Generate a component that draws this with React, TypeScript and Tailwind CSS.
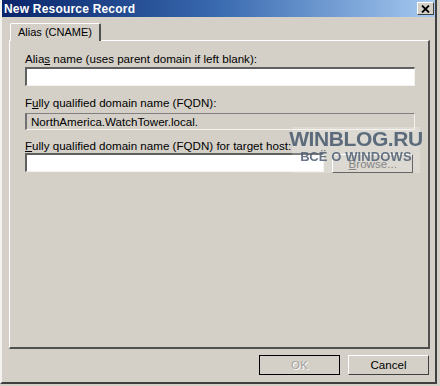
export default function App() {
  const font = { fontFamily: '"Liberation Sans", Arial, sans-serif' }
  const mark = { fontFamily: '"Liberation Sans", Arial, sans-serif', filter: 'blur(0.7px)' }

  return (
    <div className="relative w-[440px] h-[386px] overflow-hidden bg-[#d4d0c8] text-[11.6px] text-black" style={font}>
      {/* window frame */}
      <div className="w-[437px] h-[384px] border-l-2 border-l-[#f4f2ee] border-r-2 border-r-[#404040] border-b-2 border-b-[#404040] flex flex-col">
        {/* title bar */}
        <div className="h-[17px] flex items-center justify-between pl-[2px] pr-[1px] bg-gradient-to-r from-[#0a246a] via-[#3a6ab0] to-[#a6caf0]">
          <span className="text-white font-bold text-[12px] leading-none tracking-[0.2px]">New Resource Record</span>
          <button className="w-[17px] h-[13px] flex items-center justify-center bg-[#d4d0c8] border border-t-white border-l-white border-r-[#404040] border-b-[#404040]">
            <svg width="9" height="8" viewBox="0 0 9 8">
              <path d="M1 0.5 L8 7.5 M8 0.5 L1 7.5" stroke="#000" strokeWidth="1.8" />
            </svg>
          </button>
        </div>

        {/* tabs */}
        <div className="flex pl-[8px] pt-[6px]">
          <div className="relative z-10 -mb-[1px] h-[18px] px-[7px] flex items-center bg-[#d4d0c8] border-t border-l border-t-white border-l-white border-r-2 border-r-[#505050] rounded-t-[2px] text-[11px]">
            Alias (CNAME)
          </div>
        </div>

        {/* panel */}
        <div className="ml-[7px] w-[421px] h-[309px] border-t border-l border-t-white border-l-white border-r-2 border-b-2 border-r-[#505050] border-b-[#505050] flex flex-col px-[15px] pt-[11px]">
          <div className="leading-[14px]">
            Alia<u>s</u> name (uses parent domain if left blank):
          </div>
          <div className="mt-[1px] w-[390px] h-[19px] bg-white border-t-2 border-l-2 border-t-[#606060] border-l-[#606060] border-r border-b border-r-[#f4f2ee] border-b-[#f4f2ee]" />

          <div className="mt-[10px] leading-[14px]">
            F<u>u</u>lly qualified domain name (FQDN):
          </div>
          <div className="mt-[3px] w-[390px] h-[17px] flex items-center pl-[4px] bg-[#d4d0c8] border-t border-l-2 border-t-[#808080] border-l-[#707070] border-r border-b border-r-[#f4f2ee] border-b-[#f4f2ee]">
            NorthAmerica.WatchTower.local.
          </div>

          <div className="mt-[9px] leading-[13px]">
            <u>F</u>ully qualified domain name (FQDN) for target host:
          </div>
          <div className="mt-[1px] flex items-start gap-[8px]">
            <div className="w-[301px] h-[19px] bg-white border-t-2 border-l-2 border-t-[#606060] border-l-[#606060] border-r border-b border-r-[#f4f2ee] border-b-[#f4f2ee]" />
            <button className="w-[81px] h-[19px] mt-[1px] flex items-center justify-center text-[#666] border border-t-white border-l-white border-r-[#404040] border-b-[#404040]">
              <u>B</u>rowse...
            </button>
          </div>
        </div>

        {/* buttons */}
        <div className="flex justify-end gap-[8px] pr-[6px] pt-[6px]">
          <button className="w-[81px] h-[20px] flex items-center justify-center text-[#a0a0a0] border border-black">
            <span className="[text-shadow:1px_1px_0_#fff]">OK</span>
          </button>
          <button className="w-[81px] h-[20px] flex items-center justify-center border border-t-white border-l-white border-r-[#404040] border-b-[#404040]">
            Cancel
          </button>
        </div>
      </div>

      {/* watermark */}
      <div className="absolute left-[292px] top-[127px] w-[128px] h-[46px] bg-white/20 flex flex-col items-center pt-[1px]">
        <div className="text-[21px] leading-[21px] font-bold text-[#4d5e72]/90 tracking-[-0.4px]" style={mark}>
          WINBLOG.RU
        </div>
        <div className="text-[13px] leading-[16px] font-bold text-[#4d5e72]/85 tracking-[0.1px]" style={mark}>
          ВСЁ О WINDOWS
        </div>
      </div>
    </div>
  )
}
